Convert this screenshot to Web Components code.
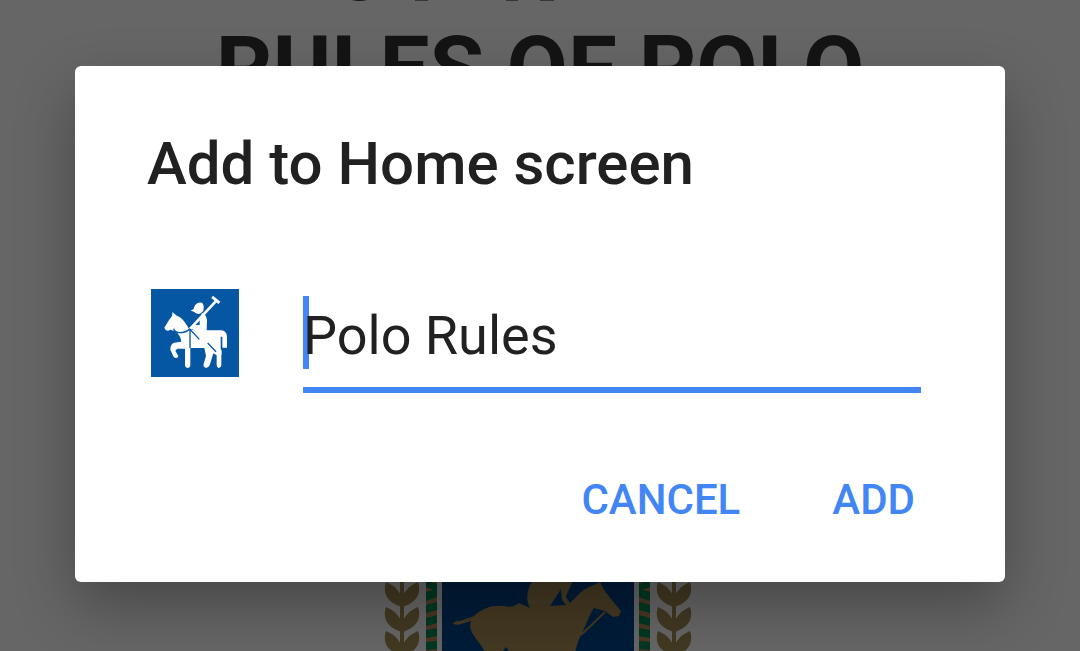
<!DOCTYPE html>
<html lang="en">
<head>
<meta charset="utf-8">
<meta name="viewport" content="width=device-width, initial-scale=1">
<title>Polo Rules</title>
<style>
    html, body {
        margin: 0;
        height: 100%;
        overflow: hidden;
        font-family: Roboto, "Liberation Sans", sans-serif;
    }
</style>
</head>
<body>
<polo-screen>
    <polo-cover slot="page"></polo-cover>
    <add-dialog heading="Add to Home screen" name="Polo Rules">
        <polo-icon slot="icon"></polo-icon>
        <dialog-button slot="actions">Cancel</dialog-button>
        <dialog-button slot="actions">Add</dialog-button>
    </add-dialog>
</polo-screen>

<script>
class PoloScreen extends HTMLElement {
    connectedCallback() {
        this.attachShadow({ mode: 'open' });
        this.shadowRoot.innerHTML = `
            <style>
                :host {
                    display: grid;
                    height: 100vh;
                    overflow: hidden;
                    background-color: #fff;
                }

                .page, .scrim {
                    grid-area: 1 / 1;
                    min-height: 0;
                }

                .scrim {
                    position: relative;
                    display: flex;
                    align-items: flex-start;
                    padding: 66px 75px;
                    background-color: rgba(0, 0, 0, 0.6);
                }
            </style>
            <div class="page"><slot name="page"></slot></div>
            <div class="scrim"><slot></slot></div>
        `;
    }
}
customElements.define('polo-screen', PoloScreen);

class PoloCover extends HTMLElement {
    connectedCallback() {
        this.attachShadow({ mode: 'open' });
        this.shadowRoot.innerHTML = `
            <style>
                :host {
                    display: flex;
                    flex-direction: column;
                    align-items: center;
                }

                h1 {
                    margin: 23px 0 449px;
                    font: 700 89px/88px Roboto, sans-serif;
                    color: #333;
                    white-space: nowrap;
                }

                svg {
                    display: block;
                }

                .line-end {
                    width: 400px;
                    height: 2px;
                }

                .crest {
                    width: 312px;
                    height: 89px;
                }
            </style>
            <svg class="line-end" viewBox="340 0 400 2" aria-hidden="true">
                <path fill="#333" d="M352 0H367Q359 2 352 0Z"/>
                <path fill="#888" d="M415 0H428V1H415ZM506 0H518V1H506ZM540 0H554V1H540Z"/>
            </svg>
            <h1>RULES OF POLO</h1>
            <svg class="crest" viewBox="384 562 312 89" aria-hidden="true">
                <defs>
                    <g id="leaf" fill="#a58e56">
                        <path d="M402 25C388 21 382 12 386 0C396 4 401 11 402 18Z"/>
                        <path d="M402 25C416 21 422 12 418 0C408 4 403 11 402 18Z"/>
                    </g>
                    <g id="wheat">
                        <use href="#leaf" y="582"/>
                        <use href="#leaf" y="607"/>
                        <use href="#leaf" y="631"/>
                        <path d="M402 562V651" stroke="#a58e56" stroke-width="4"/>
                    </g>
                    <g id="rope">
                        <path d="M426 562H437V651H426Z" fill="#b98a5a"/>
                        <path d="M426 580l11 4v7l-11-4zM426 592l11-3v8l-11 4zM426 605l11-3v8l-11 3zM426 618l11-3v8l-11 3zM426 630l11-2v8l-11 2zM426 642l11-1v8l-11 1z" fill="#008c58"/>
                    </g>
                </defs>
                <use href="#wheat"/>
                <use href="#wheat" transform="translate(1076 0) scale(-1 1)"/>
                <use href="#rope"/>
                <use href="#rope" transform="translate(1076 0) scale(-1 1)"/>
                <path d="M442 562H634V651H442Z" fill="#00478f"/>
                <path fill="#aa8f55" d="M453 624C454 621 457 621 460 621L474 616C482 608 493 605 504 606C510 608 515 606 519 603L530 608C526 601 526 590 533 580H573C570 588 567 593 566 597L570 603L581 592C587 587 593 586 598 583L600 582L602 586C606 594 614 602 621 611L619 616L613 617L605 611L594 608C589 615 587 623 583 631C579 638 577 645 575 652H510L506 647L502 652H485C480 642 471 635 470 626L471 621L458 625Z"/>
                <path fill="#00478f" d="M550 606L561 589L562 600L566 605Z"/>
                <path fill="none" stroke="#aa8f55" stroke-width="2" d="M605 612L581 635"/>
            </svg>
        `;
    }
}
customElements.define('polo-cover', PoloCover);

class AddDialog extends HTMLElement {
    connectedCallback() {
        this.attachShadow({ mode: 'open' });
        this.shadowRoot.innerHTML = `
            <style>
                :host {
                    display: block;
                    flex: 1;
                    min-width: 0;
                }

                section {
                    box-sizing: border-box;
                    padding: 62px 66px 29px 72px;
                    border-radius: 6px;
                    background-color: #fff;
                    box-shadow: 0 24px 60px rgba(0, 0, 0, 0.3);
                    color: #212121;
                }

                h2 {
                    margin: 0 0 89px;
                    font-size: 60px;
                    font-weight: 500;
                    line-height: 72px;
                }

                .field {
                    display: flex;
                    align-items: flex-start;
                    gap: 64px;
                    padding: 0 18px 0 4px;
                }

                label {
                    flex: 1;
                    display: block;
                    padding: 7px 0 18px;
                    border-bottom: 6px solid #4285f4;
                }

                input {
                    display: block;
                    box-sizing: border-box;
                    width: 100%;
                    height: 73px;
                    padding: 5px 0 0;
                    border: 0;
                    outline: 0;
                    border-radius: 0;
                    font: 400 54px Roboto, sans-serif;
                    color: #212121;
                    background: linear-gradient(#4285f4, #4285f4) left / 6px 100% no-repeat;
                }

                .actions {
                    display: flex;
                    justify-content: flex-end;
                    gap: 44px;
                    margin-top: 52px;
                }
            </style>
            <section role="dialog" aria-labelledby="heading">
                <h2 id="heading">${this.getAttribute('heading')}</h2>
                <div class="field">
                    <slot name="icon"></slot>
                    <label><input type="text" aria-label="Name" value="${this.getAttribute('name')}" spellcheck="false"></label>
                </div>
                <div class="actions"><slot name="actions"></slot></div>
            </section>
        `;
    }
}
customElements.define('add-dialog', AddDialog);

class DialogButton extends HTMLElement {
    connectedCallback() {
        this.attachShadow({ mode: 'open' });
        this.shadowRoot.innerHTML = `
            <style>
                :host {
                    display: block;
                }

                button {
                    height: 108px;
                    padding: 0 24px;
                    border: 0;
                    background: none;
                    font: 500 42px Roboto, sans-serif;
                    color: #4285f4;
                    text-transform: uppercase;
                    cursor: pointer;
                }
            </style>
            <button type="button"><slot></slot></button>
        `;
    }
}
customElements.define('dialog-button', DialogButton);

class PoloIcon extends HTMLElement {
    connectedCallback() {
        this.attachShadow({ mode: 'open' });
        this.shadowRoot.innerHTML = `
            <style>
                :host {
                    display: block;
                    flex: none;
                }

                svg {
                    display: block;
                    width: 88px;
                    height: 88px;
                }
            </style>
            <svg viewBox="0 0 264 264" role="img" aria-label="Polo player">
                <path fill="#0557a4" d="M0 0H264V264H0Z"/>
                <g fill="#fff">
                    <path d="M64 69L77 80C94 85 105 103 115 121L132 124H211C223 125 228 134 228 146V176H214V143H209V180C215 187 211 195 211 204V229Q210 237 203 237Q197 236 197 229V199L187 193L176 229Q172 238 163 236Q156 233 158 225L165 200L160 177H118V229Q117 237 109 237Q102 236 102 229V179H79L73 185L82 202Q81 208 74 207Q69 207 67 202L58 182Q58 165 69 161L91 158Q90 143 76 128Q65 124 58 122Q46 131 40 116L56 90Q66 82 64 69Z"/>
                    <path d="M119 65L128 60C130 45 146 35 156 44Q160 52 157 65Q151 73 143 75Q133 74 129 68Z"/>
                    <path d="M153 72Q166 76 168 93L167 126H136L121 119L131 108H146V91Z"/>
                    <path d="M186 20L208 38L202 45L181 27Z"/>
                </g>
                <path d="M115 122L197 34" stroke="#fff" stroke-width="8"/>
                <path d="M68 119Q70 129 83 131Q104 132 116 120L145 151M117 121V177M170 162L195 188" fill="none" stroke="#0557a4" stroke-width="4"/>
            </svg>
        `;
    }
}
customElements.define('polo-icon', PoloIcon);
</script>
</body>
</html>
